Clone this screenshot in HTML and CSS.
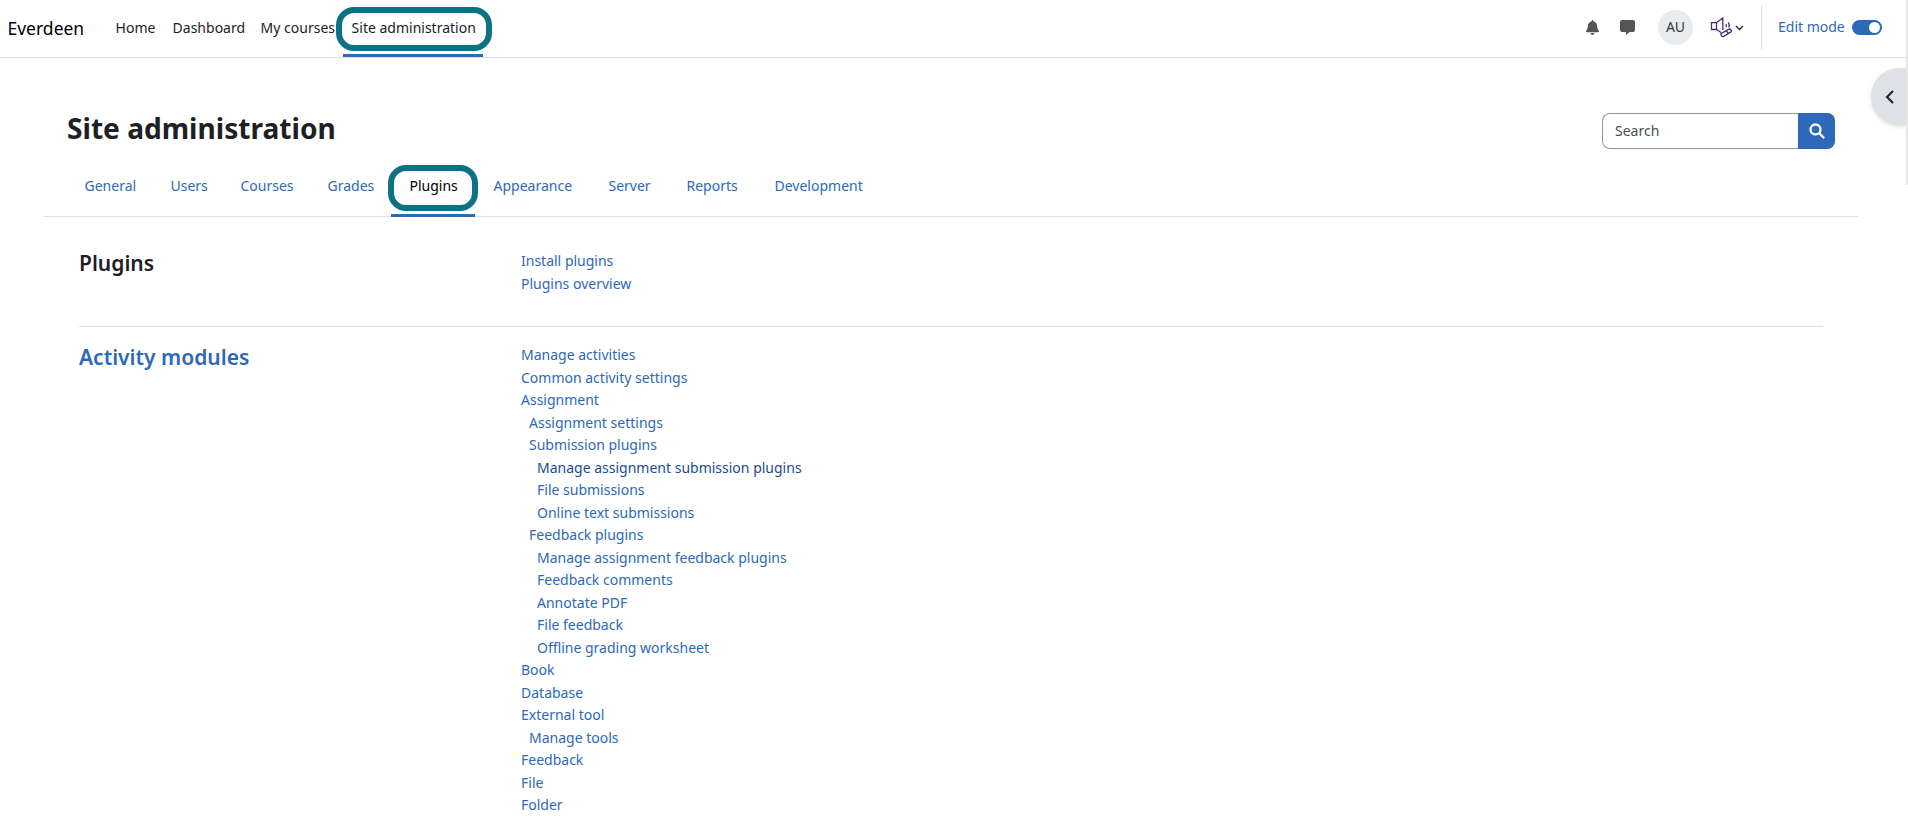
FILE: index.html
```html
<!DOCTYPE html>
<html lang="en">
<head>
<meta charset="utf-8">
<title>Site administration</title>
<link rel="stylesheet" href="styles.css">
</head>
<body>
<header class="navbar">
  <a class="brand">Everdeen</a>
  <nav class="primary-nav">
    <a class="nav-home">Home</a>
    <a class="nav-dashboard">Dashboard</a>
    <a class="nav-courses">My courses</a>
    <a class="nav-admin active">Site administration<span class="highlight"></span></a>
  </nav>
  <div class="user-tools">
    <svg class="icon-bell" viewBox="0 0 448 512"><path d="M224 512c35 0 64-29 64-64H160c0 35 29 64 64 64zm215-150c-19-21-55-52-55-154 0-78-54-140-128-155V32c0-18-14-32-32-32s-32 14-32 32v21C118 68 64 130 64 208c0 102-36 133-55 154-6 6-9 14-9 22 0 16 13 32 32 32h384c19 0 32-16 32-32 0-8-3-16-9-22z"/></svg>
    <svg class="icon-chat" viewBox="0 0 15 15"><path d="M2 0h11a2 2 0 0 1 2 2v8a2 2 0 0 1-2 2H9.500L6 15v-3H2a2 2 0 0 1-2-2V2a2 2 0 0 1 2-2z"/></svg>
    <span class="avatar">AU</span>
    <svg class="icon-speaker" viewBox="0 0 22 22"><path d="M1.500 6.700h5v6.800h-5zM6.500 6.700L12.800 2v12M6.500 13.500l4.500 3M15.800 8q1 1.500.3 3.300M18.300 6.500q1.800 2.500.5 5"/><path d="M11 17.600L19.300 13q2 .3 2.200 2.500L13.500 20.500q-3 0-2.500-2.900zM16.500 14.800l1.700 2.600"/></svg>
    <svg class="icon-chevron" viewBox="0 0 9 6"><path d="M1 1l3.500 3.500L8 1"/></svg>
    <div class="edit-mode"><span>Edit mode</span><i class="switch"></i></div>
  </div>
</header>
<button class="drawer-toggle"><svg viewBox="0 0 10 14"><path d="M8 1L2 7l6 6"/></svg></button>
<div class="scroll-thumb"></div>
<main class="page">
  <div class="page-head">
    <h1>Site administration</h1>
    <div class="search"><span>Search</span><button class="search-btn"><svg viewBox="0 0 16 16"><circle cx="6.500" cy="6.500" r="5"/><path d="M10.500 10.500L14.500 14.500"/></svg></button></div>
  </div>
  <nav class="tabs">
    <a class="tab-general">General</a>
    <a class="tab-users">Users</a>
    <a class="tab-courses">Courses</a>
    <a class="tab-grades">Grades</a>
    <a class="tab-plugins active">Plugins<span class="highlight"></span></a>
    <a class="tab-appearance">Appearance</a>
    <a class="tab-server">Server</a>
    <a class="tab-reports">Reports</a>
    <a class="tab-development">Development</a>
  </nav>
  <section class="category">
    <h2>Plugins</h2>
    <ul>
      <li>Install plugins</li>
      <li>Plugins overview</li>
    </ul>
  </section>
  <section class="category modules">
    <h2>Activity modules</h2>
    <ul>
      <li>Manage activities</li>
      <li>Common activity settings</li>
      <li>Assignment</li>
      <li class="level-1">Assignment settings</li>
      <li class="level-1">Submission plugins</li>
      <li class="level-2 hovered">Manage assignment submission plugins</li>
      <li class="level-2">File submissions</li>
      <li class="level-2">Online text submissions</li>
      <li class="level-1">Feedback plugins</li>
      <li class="level-2">Manage assignment feedback plugins</li>
      <li class="level-2">Feedback comments</li>
      <li class="level-2">Annotate PDF</li>
      <li class="level-2">File feedback</li>
      <li class="level-2">Offline grading worksheet</li>
      <li>Book</li>
      <li>Database</li>
      <li>External tool</li>
      <li class="level-1">Manage tools</li>
      <li>Feedback</li>
      <li>File</li>
      <li>Folder</li>
    </ul>
  </section>
</main>
</body>
</html>
```
FILE: styles.css
```css
* { box-sizing: border-box; }
html { overflow: hidden; }
body {
  margin: 0;
  height: 819px;
  overflow: hidden;
  position: relative;
  background: #fff;
  color: #1d2125;
  font: 14px/22.5px "Noto Sans", sans-serif;
}
svg { display: block; flex: none; }
button { border: 0; padding: 0; }

/* Top bar */
.navbar {
  display: flex;
  height: 58px;
  border-bottom: 1px solid #dee2e6;
}
.brand {
  width: 107px;
  padding: 17px 0 0 7.5px;
  color: #000;
  font-size: 17.5px;
}
.primary-nav { display: flex; }
.primary-nav a {
  position: relative;
  height: 57px;
  padding: 17px 0 0 8.6px;
  white-space: nowrap;
}
.nav-home { width: 57px; }
.nav-dashboard { width: 88px; }
.nav-courses { width: 91px; }
.nav-admin { width: 140px; }
.primary-nav .active { border-bottom: 3px solid #2d69b9; }
.highlight {
  position: absolute;
  border: 6px solid #0b7285;
}
.nav-admin .highlight {
  left: -7px;
  top: 7px;
  width: 156px;
  height: 44px;
  border-radius: 18px;
}
.user-tools {
  display: flex;
  align-items: center;
  height: 54px;
  margin-left: auto;
  padding-right: 26px;
}
.icon-bell { width: 13px; height: 15px; fill: #555; }
.icon-chat { width: 15px; height: 15px; margin-left: 21px; fill: #555; }
.avatar {
  display: grid;
  place-items: center;
  width: 35px;
  height: 35px;
  margin-left: 23px;
  border-radius: 50%;
  background: #e9ecef;
  color: #343a40;
}
.icon-speaker {
  width: 22px;
  height: 22px;
  margin-left: 17px;
  fill: none;
  stroke: #462d6b;
  stroke-width: 1.3;
}
.icon-chevron {
  width: 9px;
  height: 6px;
  margin: 2px 0 0 3px;
  fill: none;
  stroke: #1d2125;
  stroke-width: 1.3;
}
.edit-mode {
  display: flex;
  align-items: center;
  width: 121px;
  height: 45px;
  margin-left: 17px;
  padding-left: 16px;
  border-left: 1px solid #dee2e6;
  color: #2d69b9;
  white-space: nowrap;
}
.edit-mode span { width: 74px; }
.switch {
  width: 30px;
  height: 15px;
  padding: 2px;
  border-radius: 8px;
  background: #2d69b9;
}
.switch::after {
  content: "";
  display: block;
  width: 11px;
  height: 11px;
  margin-left: 15px;
  border-radius: 50%;
  background: #fff;
}

/* Overlays on the right edge */
.drawer-toggle {
  position: absolute;
  right: 2px;
  top: 68px;
  width: 35px;
  height: 57px;
  padding-left: 14px;
  border-radius: 29px 0 0 29px;
  background: #dee2e6;
  box-shadow: 0 2px 4px rgba(0, 0, 0, .12);
}
.drawer-toggle svg {
  width: 10px;
  height: 14px;
  fill: none;
  stroke: #1d2125;
  stroke-width: 2;
}
.scroll-thumb {
  position: absolute;
  right: 0;
  top: 0;
  width: 2px;
  height: 185px;
  border-radius: 0 0 0 2px;
  background: #e6e6e6;
}

/* Page heading and search */
.page { padding: 0 50px 0 44px; }
.page-head {
  display: flex;
  justify-content: space-between;
  height: 107px;
  padding: 49px 23px 0;
}
h1 {
  margin: 0;
  font-size: 28.1px;
  line-height: 42px;
}
.search {
  display: flex;
  justify-content: space-between;
  align-items: center;
  width: 233px;
  height: 36px;
  margin-top: 6px;
  padding-left: 12px;
  border: 1px solid #8f959e;
  border-right: 0;
  border-radius: 8px;
  color: #495057;
}
.search span { padding-top: 1px; }
.search-btn {
  display: grid;
  place-items: center;
  width: 37px;
  height: 36px;
  border-radius: 0 8px 8px 0;
  background: #2d69b9;
}
.search-btn svg {
  width: 16px;
  height: 16px;
  fill: none;
  stroke: #fff;
  stroke-width: 2.3;
  stroke-linecap: round;
}

/* Secondary tabs */
.tabs {
  display: flex;
  height: 52px;
  padding-left: 22px;
  border-bottom: 1px solid #dee2e6;
  color: #2d69b9;
}
.tabs a {
  position: relative;
  height: 52px;
  padding: 10px 0 0 18.5px;
}
.tab-general { width: 86px; }
.tab-users { width: 70px; }
.tab-courses { width: 87px; }
.tab-grades { width: 82px; }
.tab-plugins { width: 84px; }
.tab-appearance { width: 115px; }
.tab-server { width: 78px; }
.tab-reports { width: 88px; }
.tab-development { width: 127px; }
.tabs .active { border-bottom: 3px solid #2d69b9; color: #000; }
.tab-plugins .highlight {
  left: -3px;
  top: 0;
  width: 90px;
  height: 46px;
  border-radius: 18px;
}

/* Setting categories */
.category {
  display: grid;
  grid-template-columns: 442px 1fr;
  width: 1744px;
  height: 110px;
  margin-left: 35px;
  padding-top: 33px;
  border-bottom: 1px solid #dee2e6;
}
.modules {
  height: auto;
  padding-top: 17px;
  border: 0;
  color: #2d69b9;
}
h2 {
  margin: 0;
  font-size: 21px;
  line-height: 27px;
  font-weight: 600;
}
ul {
  margin: 0;
  padding: 0;
  list-style: none;
  color: #2d69b9;
}
.level-1 { padding-left: 8px; }
.level-2 { padding-left: 16px; }
.hovered { color: #1d4c8c; }
```
